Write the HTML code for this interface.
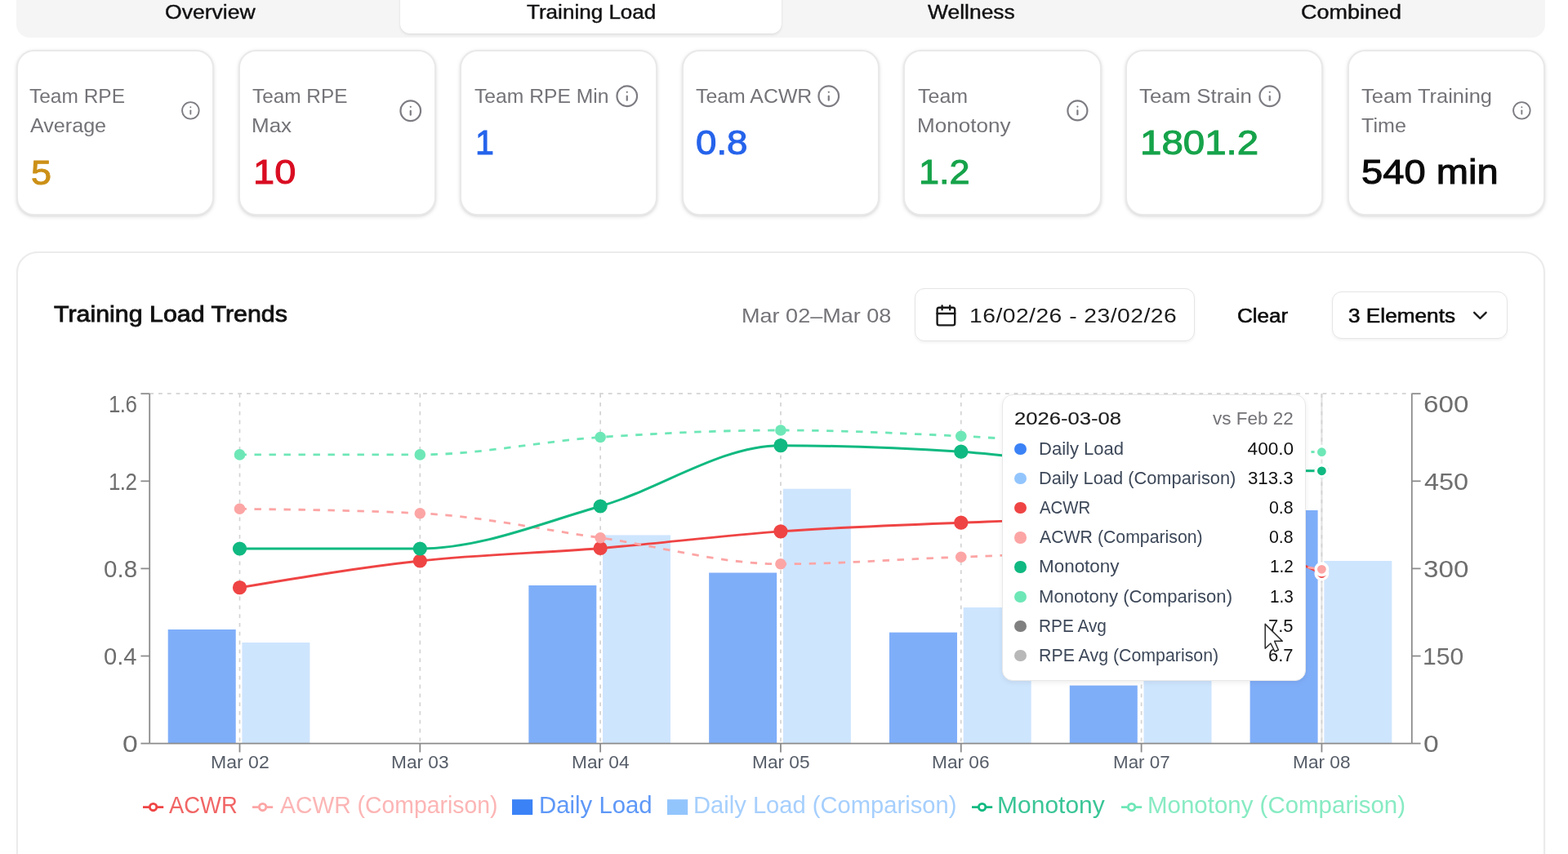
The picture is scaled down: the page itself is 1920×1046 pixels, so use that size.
<!DOCTYPE html>
<html lang="en"><head><meta charset="utf-8"><title>Training Load</title>
<style>
html,body{margin:0;padding:0;background:#fff;}
body{width:1920px;height:1046px;overflow:hidden;position:relative;font-family:"Liberation Sans", sans-serif;-webkit-font-smoothing:antialiased;}
#app{position:absolute;left:0;top:0;width:1920px;height:1046px;overflow:hidden;background:#fff;filter:blur(0.55px);}
.tx{position:absolute;white-space:nowrap;display:block;transform-origin:0 0;}
.li{position:absolute;display:block;overflow:visible;}
.tabs{position:absolute;left:20px;top:-20px;width:1872px;height:66px;background:#f5f5f5;border-radius:16px;}
.tab-active{position:absolute;left:490px;top:-20px;width:467px;height:61px;background:#fff;border-radius:12px;box-shadow:0 1.8px 3.6px rgba(0,0,0,.08),0 0 2px rgba(0,0,0,.06);}
.card{position:absolute;top:61.4px;width:242.2px;height:202.4px;box-sizing:border-box;background:#fff;border:2px solid #e9e9e9;border-radius:22px;box-shadow:0 1.8px 5.4px rgba(0,0,0,.10),0 1.8px 3.6px -1.8px rgba(0,0,0,.10);}
.panel{position:absolute;left:20px;top:308px;width:1872px;height:900px;box-sizing:border-box;background:#fff;border:2px solid #ebebeb;border-radius:26px;box-shadow:0 1.8px 3.6px rgba(0,0,0,.04);}
.btn{position:absolute;box-sizing:border-box;background:#fff;border:1.8px solid #e5e5e5;border-radius:12px;box-shadow:0 1.8px 3.6px rgba(0,0,0,.05);}
.tip{position:absolute;left:1227.2px;top:483.4px;width:372.2px;height:350.4px;box-sizing:border-box;background:#fff;border:1.8px solid #e8e8e8;border-radius:13px;box-shadow:0 2px 6px rgba(0,0,0,.07);}
.bl{position:absolute;left:1242.3px;width:14.4px;height:14.4px;border-radius:50%;display:block;}
#chart{position:absolute;left:0;top:0;}
</style></head>
<body><div id="app">
<nav class="tabbar" role="tablist" aria-label="Sections">
<div class="tabs"></div><div class="tab-active"></div>
<span class="tx" style="left:201.82px;top:-2.03px;font-size:24.2px;line-height:33.88px;color:#111113;transform:scaleX(1.0979);-webkit-text-stroke:0.4px #111113;">Overview</span><span class="tx" style="left:645.02px;top:-2.03px;font-size:24.2px;line-height:33.88px;color:#111113;transform:scaleX(1.0770);-webkit-text-stroke:0.4px #111113;">Training Load</span><span class="tx" style="left:1135.82px;top:-2.03px;font-size:24.2px;line-height:33.88px;color:#111113;transform:scaleX(1.0930);-webkit-text-stroke:0.4px #111113;">Wellness</span><span class="tx" style="left:1592.91px;top:-2.03px;font-size:24.2px;line-height:33.88px;color:#111113;transform:scaleX(1.1165);-webkit-text-stroke:0.4px #111113;">Combined</span>
</nav>
<section class="metrics" aria-label="Team metrics">
<div class="card" style="left:20.20px"></div><div class="card" style="left:291.75px"></div><div class="card" style="left:563.30px"></div><div class="card" style="left:834.85px"></div><div class="card" style="left:1106.40px"></div><div class="card" style="left:1377.95px"></div><div class="card" style="left:1649.50px"></div>
<svg class="li" style="left:221.34px;top:123.04px" width="24.72" height="24.72" viewBox="0 0 24 24" fill="none" stroke="#7c7c82" stroke-width="1.8" stroke-linecap="round" stroke-linejoin="round"><circle cx="12" cy="12" r="10"/><path d="M12 16v-4"/><path d="M12 8h.01"/></svg><svg class="li" style="left:488.14px;top:120.54px" width="29.52" height="29.52" viewBox="0 0 24 24" fill="none" stroke="#7c7c82" stroke-width="1.8" stroke-linecap="round" stroke-linejoin="round"><circle cx="12" cy="12" r="10"/><path d="M12 16v-4"/><path d="M12 8h.01"/></svg><svg class="li" style="left:753.24px;top:102.54px" width="29.52" height="29.52" viewBox="0 0 24 24" fill="none" stroke="#7c7c82" stroke-width="1.8" stroke-linecap="round" stroke-linejoin="round"><circle cx="12" cy="12" r="10"/><path d="M12 16v-4"/><path d="M12 8h.01"/></svg><svg class="li" style="left:999.84px;top:102.54px" width="29.52" height="29.52" viewBox="0 0 24 24" fill="none" stroke="#7c7c82" stroke-width="1.8" stroke-linecap="round" stroke-linejoin="round"><circle cx="12" cy="12" r="10"/><path d="M12 16v-4"/><path d="M12 8h.01"/></svg><svg class="li" style="left:1304.60px;top:121.30px" width="28.80" height="28.80" viewBox="0 0 24 24" fill="none" stroke="#7c7c82" stroke-width="1.8" stroke-linecap="round" stroke-linejoin="round"><circle cx="12" cy="12" r="10"/><path d="M12 16v-4"/><path d="M12 8h.01"/></svg><svg class="li" style="left:1539.74px;top:102.54px" width="29.52" height="29.52" viewBox="0 0 24 24" fill="none" stroke="#7c7c82" stroke-width="1.8" stroke-linecap="round" stroke-linejoin="round"><circle cx="12" cy="12" r="10"/><path d="M12 16v-4"/><path d="M12 8h.01"/></svg><svg class="li" style="left:1851.24px;top:122.94px" width="24.72" height="24.72" viewBox="0 0 24 24" fill="none" stroke="#7c7c82" stroke-width="1.8" stroke-linecap="round" stroke-linejoin="round"><circle cx="12" cy="12" r="10"/><path d="M12 16v-4"/><path d="M12 8h.01"/></svg>
<span class="tx" style="left:36.30px;top:101.07px;font-size:24.2px;line-height:33.88px;color:#737378;transform:scaleX(1.0124);">Team RPE</span><span class="tx" style="left:36.70px;top:137.27px;font-size:24.2px;line-height:33.88px;color:#737378;transform:scaleX(1.0381);">Average</span><span class="tx" style="left:308.70px;top:101.07px;font-size:24.2px;line-height:33.88px;color:#737378;transform:scaleX(1.0072);">Team RPE</span><span class="tx" style="left:307.63px;top:137.27px;font-size:24.2px;line-height:33.88px;color:#737378;transform:scaleX(1.0740);">Max</span><span class="tx" style="left:580.60px;top:101.07px;font-size:24.2px;line-height:33.88px;color:#737378;transform:scaleX(1.0198);">Team RPE Min</span><span class="tx" style="left:851.80px;top:101.07px;font-size:24.2px;line-height:33.88px;color:#737378;transform:scaleX(1.0280);">Team ACWR</span><span class="tx" style="left:1124.40px;top:101.07px;font-size:24.2px;line-height:33.88px;color:#737378;transform:scaleX(1.0328);">Team</span><span class="tx" style="left:1123.32px;top:137.27px;font-size:24.2px;line-height:33.88px;color:#737378;transform:scaleX(1.0770);">Monotony</span><span class="tx" style="left:1395.00px;top:101.07px;font-size:24.2px;line-height:33.88px;color:#737378;transform:scaleX(1.0674);">Team Strain</span><span class="tx" style="left:1666.90px;top:101.07px;font-size:24.2px;line-height:33.88px;color:#737378;transform:scaleX(1.0530);">Team Training</span><span class="tx" style="left:1666.90px;top:137.27px;font-size:24.2px;line-height:33.88px;color:#737378;transform:scaleX(1.0382);">Time</span><span class="tx" style="left:37.78px;top:181.38px;font-size:43.4px;line-height:60.76px;color:#cc9016;transform:scaleX(1.0348);-webkit-text-stroke:1.0px #cc9016;">5</span><span class="tx" style="left:309.50px;top:182.05px;font-size:42.0px;line-height:58.8px;color:#d90d22;transform:scaleX(1.1186);-webkit-text-stroke:1.0px #d90d22;">10</span><span class="tx" style="left:581.85px;top:145.85px;font-size:42.0px;line-height:58.8px;color:#2563eb;transform:scaleX(0.9800);-webkit-text-stroke:1.0px #2563eb;">1</span><span class="tx" style="left:852.46px;top:145.85px;font-size:42.0px;line-height:58.8px;color:#2563eb;transform:scaleX(1.0872);-webkit-text-stroke:1.0px #2563eb;">0.8</span><span class="tx" style="left:1125.32px;top:182.05px;font-size:42.0px;line-height:58.8px;color:#16a34a;transform:scaleX(1.0722);-webkit-text-stroke:1.0px #16a34a;">1.2</span><span class="tx" style="left:1395.77px;top:145.85px;font-size:42.0px;line-height:58.8px;color:#16a34a;transform:scaleX(1.1303);-webkit-text-stroke:1.0px #16a34a;">1801.2</span><span class="tx" style="left:1667.24px;top:182.05px;font-size:42.0px;line-height:58.8px;color:#0a0a0a;transform:scaleX(1.1233);-webkit-text-stroke:1.0px #0a0a0a;">540 min</span>
</section>
<section class="trends" aria-label="Training Load Trends">
<div class="panel"></div>
<div class="toolbar">
<div class="btn" style="left:1120px;top:353.2px;width:343.2px;height:65px"></div>
<div class="btn" style="left:1630.5px;top:357px;width:215.5px;height:57.5px"></div>
<svg class="li" style="left:1144px;top:371.6px" width="28.8" height="28.8" viewBox="0 0 24 24" fill="none" stroke="#1a1a1a" stroke-width="2" stroke-linecap="round" stroke-linejoin="round"><path d="M8 2v4"/><path d="M16 2v4"/><rect width="18" height="18" x="3" y="4" rx="2"/><path d="M3 10h18"/></svg>
<svg class="li" style="left:1797.7px;top:372.1px" width="28.8" height="28.8" viewBox="0 0 24 24" fill="none" stroke="#1a1a1a" stroke-width="2" stroke-linecap="round" stroke-linejoin="round"><path d="m6 9 6 6 6-6"/></svg>
<span class="tx" style="left:65.85px;top:365.08px;font-size:28.4px;line-height:39.76px;color:#111111;transform:scaleX(1.0696);-webkit-text-stroke:0.85px #111111;">Training Load Trends</span><span class="tx" style="left:907.63px;top:369.87px;font-size:24.2px;line-height:33.88px;color:#737378;transform:scaleX(1.1181);">Mar 02–Mar 08</span><span class="tx" style="left:1186.83px;top:369.87px;font-size:24.2px;line-height:33.88px;color:#1c1c1c;transform:scaleX(1.1700);letter-spacing:0.391px;">16/02/26 - 23/02/26</span><span class="tx" style="left:1514.97px;top:369.67px;font-size:24.2px;line-height:33.88px;color:#0a0a0a;transform:scaleX(1.0778);-webkit-text-stroke:0.55px #0a0a0a;">Clear</span><span class="tx" style="left:1650.80px;top:369.67px;font-size:24.2px;line-height:33.88px;color:#0a0a0a;transform:scaleX(1.0827);-webkit-text-stroke:0.55px #0a0a0a;">3 Elements</span>
</div>
<div class="chart-area">
<svg id="chart" width="1920" height="1046" viewBox="0 0 1920 1046" role="img" aria-label="Training load chart">
<line x1="1618.42" y1="482.2" x2="1618.42" y2="910.6" stroke="#e3e3e3" stroke-width="2.2"/>
<g stroke="#d3d3d3" stroke-width="1.7" stroke-dasharray="4.8 6" fill="none">
<line x1="183.2" y1="482.2" x2="1728.8" y2="482.2"/>
<line x1="293.50" y1="482.2" x2="293.50" y2="910.6"/>
<line x1="514.32" y1="482.2" x2="514.32" y2="910.6"/>
<line x1="735.14" y1="482.2" x2="735.14" y2="910.6"/>
<line x1="955.96" y1="482.2" x2="955.96" y2="910.6"/>
<line x1="1176.78" y1="482.2" x2="1176.78" y2="910.6"/>
<line x1="1397.60" y1="482.2" x2="1397.60" y2="910.6"/>
<line x1="1618.42" y1="482.2" x2="1618.42" y2="910.6"/>
</g>
<rect x="205.70" y="771" width="83.0" height="139.60" fill="#3b82f6" fill-opacity="0.65"/>
<rect x="296.40" y="787" width="83.0" height="123.60" fill="#93c5fd" fill-opacity="0.45"/>
<rect x="647.34" y="717" width="83.0" height="193.60" fill="#3b82f6" fill-opacity="0.65"/>
<rect x="738.04" y="655.4" width="83.0" height="255.20" fill="#93c5fd" fill-opacity="0.45"/>
<rect x="868.16" y="701.5" width="83.0" height="209.10" fill="#3b82f6" fill-opacity="0.65"/>
<rect x="958.86" y="598.7" width="83.0" height="311.90" fill="#93c5fd" fill-opacity="0.45"/>
<rect x="1088.98" y="774.6" width="83.0" height="136.00" fill="#3b82f6" fill-opacity="0.65"/>
<rect x="1179.68" y="744" width="83.0" height="166.60" fill="#93c5fd" fill-opacity="0.45"/>
<rect x="1309.80" y="839.6" width="83.0" height="71.00" fill="#3b82f6" fill-opacity="0.65"/>
<rect x="1400.50" y="760" width="83.0" height="150.60" fill="#93c5fd" fill-opacity="0.45"/>
<rect x="1530.62" y="625" width="83.0" height="285.60" fill="#3b82f6" fill-opacity="0.65"/>
<rect x="1621.32" y="687" width="83.0" height="223.60" fill="#93c5fd" fill-opacity="0.45"/>
<g stroke="#8c8c8c" stroke-width="1.8" fill="none">
<line x1="183.2" y1="910.6" x2="1728.8" y2="910.6"/>
<line x1="183.2" y1="482.2" x2="183.2" y2="910.6"/>
<line x1="1728.8" y1="482.2" x2="1728.8" y2="910.6"/>
<line x1="172.39999999999998" y1="482.20" x2="183.2" y2="482.20"/>
<line x1="1728.8" y1="482.20" x2="1739.6" y2="482.20"/>
<line x1="172.39999999999998" y1="589.30" x2="183.2" y2="589.30"/>
<line x1="1728.8" y1="589.30" x2="1739.6" y2="589.30"/>
<line x1="172.39999999999998" y1="696.40" x2="183.2" y2="696.40"/>
<line x1="1728.8" y1="696.40" x2="1739.6" y2="696.40"/>
<line x1="172.39999999999998" y1="803.50" x2="183.2" y2="803.50"/>
<line x1="1728.8" y1="803.50" x2="1739.6" y2="803.50"/>
<line x1="172.39999999999998" y1="910.60" x2="183.2" y2="910.60"/>
<line x1="1728.8" y1="910.60" x2="1739.6" y2="910.60"/>
<line x1="293.50" y1="910.6" x2="293.50" y2="921.4"/>
<line x1="514.32" y1="910.6" x2="514.32" y2="921.4"/>
<line x1="735.14" y1="910.6" x2="735.14" y2="921.4"/>
<line x1="955.96" y1="910.6" x2="955.96" y2="921.4"/>
<line x1="1176.78" y1="910.6" x2="1176.78" y2="921.4"/>
<line x1="1397.60" y1="910.6" x2="1397.60" y2="921.4"/>
<line x1="1618.42" y1="910.6" x2="1618.42" y2="921.4"/>
</g>
<path d="M293.50,719.70C367.11,707.37 440.71,695.03 514.32,687.00C587.93,678.97 661.53,677.52 735.14,671.50C808.75,665.48 882.35,656.12 955.96,650.90C1029.57,645.68 1103.17,643.02 1176.78,640.20C1250.39,637.38 1323.99,634.00 1397.60,634.00C1471.21,634.00 1544.81,668.25 1618.42,702.50" fill="none" stroke="#ef4444" stroke-width="2.9"/>
<circle cx="293.50" cy="719.70" r="8.6" fill="#ef4444"/>
<circle cx="514.32" cy="687.00" r="8.6" fill="#ef4444"/>
<circle cx="735.14" cy="671.50" r="8.6" fill="#ef4444"/>
<circle cx="955.96" cy="650.90" r="8.6" fill="#ef4444"/>
<circle cx="1176.78" cy="640.20" r="8.6" fill="#ef4444"/>
<circle cx="1397.60" cy="634.00" r="8.6" fill="#ef4444"/>
<circle cx="1618.42" cy="702.50" r="8.6" fill="#ef4444"/>
<path d="M293.50,623.30C367.11,624.20 440.71,625.10 514.32,628.70C587.93,632.30 661.53,648.35 735.14,658.70C808.75,669.05 882.35,690.80 955.96,690.80C1029.57,690.80 1103.17,684.67 1176.78,682.20C1250.39,679.73 1323.99,676.00 1397.60,676.00C1471.21,676.00 1544.81,686.65 1618.42,697.30" fill="none" stroke="#fca5a5" stroke-width="2.8" stroke-dasharray="8.4 9.6"/>
<circle cx="293.50" cy="623.30" r="6.800000000000001" fill="#fca5a5"/>
<circle cx="514.32" cy="628.70" r="6.800000000000001" fill="#fca5a5"/>
<circle cx="735.14" cy="658.70" r="6.800000000000001" fill="#fca5a5"/>
<circle cx="955.96" cy="690.80" r="6.800000000000001" fill="#fca5a5"/>
<circle cx="1176.78" cy="682.20" r="6.800000000000001" fill="#fca5a5"/>
<circle cx="1397.60" cy="676.00" r="6.800000000000001" fill="#fca5a5"/>
<circle cx="1618.42" cy="697.30" r="6.800000000000001" fill="#fca5a5"/>
<path d="M293.50,672.00C367.11,672.00 440.71,672.00 514.32,672.00C587.93,672.00 661.53,641.05 735.14,620.00C808.75,598.95 882.35,545.70 955.96,545.70C1029.57,545.70 1103.17,548.48 1176.78,553.20C1250.39,557.92 1323.99,572.13 1397.60,574.00C1471.21,575.87 1544.81,576.33 1618.42,576.80" fill="none" stroke="#10b981" stroke-width="3.0"/>
<circle cx="293.50" cy="672.00" r="8.6" fill="#10b981"/>
<circle cx="514.32" cy="672.00" r="8.6" fill="#10b981"/>
<circle cx="735.14" cy="620.00" r="8.6" fill="#10b981"/>
<circle cx="955.96" cy="545.70" r="8.6" fill="#10b981"/>
<circle cx="1176.78" cy="553.20" r="8.6" fill="#10b981"/>
<circle cx="1397.60" cy="574.00" r="8.6" fill="#10b981"/>
<circle cx="1618.42" cy="576.80" r="8.6" fill="#10b981"/>
<path d="M293.50,556.90C367.11,556.90 440.71,556.90 514.32,556.90C587.93,556.90 661.53,540.48 735.14,535.50C808.75,530.52 882.35,527.00 955.96,527.00C1029.57,527.00 1103.17,530.70 1176.78,534.20C1250.39,537.70 1323.99,544.75 1397.60,548.00C1471.21,551.25 1544.81,552.48 1618.42,553.70" fill="none" stroke="#6ee7b7" stroke-width="2.8" stroke-dasharray="8.4 9.6"/>
<circle cx="293.50" cy="556.90" r="6.800000000000001" fill="#6ee7b7"/>
<circle cx="514.32" cy="556.90" r="6.800000000000001" fill="#6ee7b7"/>
<circle cx="735.14" cy="535.50" r="6.800000000000001" fill="#6ee7b7"/>
<circle cx="955.96" cy="527.00" r="6.800000000000001" fill="#6ee7b7"/>
<circle cx="1176.78" cy="534.20" r="6.800000000000001" fill="#6ee7b7"/>
<circle cx="1397.60" cy="548.00" r="6.800000000000001" fill="#6ee7b7"/>
<circle cx="1618.42" cy="553.70" r="6.800000000000001" fill="#6ee7b7"/>
<circle cx="1618.42" cy="702.5" r="7.2" fill="#ef4444" stroke="#ffffff" stroke-width="3.6"/>
<circle cx="1618.42" cy="697.3" r="7.2" fill="#fca5a5" stroke="#ffffff" stroke-width="3.6"/>
<circle cx="1618.42" cy="576.8" r="7.2" fill="#10b981" stroke="#ffffff" stroke-width="3.6"/>
<circle cx="1618.42" cy="553.7" r="7.2" fill="#6ee7b7" stroke="#ffffff" stroke-width="3.6"/>
</svg>
<div class="axis-labels">
<span class="tx" style="left:133.30px;top:475.36px;font-size:28.8px;line-height:40.32px;color:#6e6e6e;transform:scaleX(0.9000);letter-spacing:-0.619px;">1.6</span><span class="tx" style="left:133.30px;top:570.16px;font-size:28.8px;line-height:40.32px;color:#6e6e6e;transform:scaleX(0.9000);letter-spacing:-0.619px;">1.2</span><span class="tx" style="left:127.27px;top:677.26px;font-size:28.8px;line-height:40.32px;color:#6e6e6e;transform:scaleX(1.0259);">0.8</span><span class="tx" style="left:126.79px;top:784.36px;font-size:28.8px;line-height:40.32px;color:#6e6e6e;transform:scaleX(1.0124);">0.4</span><span class="tx" style="left:149.63px;top:891.46px;font-size:28.8px;line-height:40.32px;color:#6e6e6e;transform:scaleX(1.1700);">0</span><span class="tx" style="left:1743.25px;top:475.36px;font-size:28.8px;line-height:40.32px;color:#6e6e6e;transform:scaleX(1.1514);">600</span><span class="tx" style="left:1744.40px;top:570.16px;font-size:28.8px;line-height:40.32px;color:#6e6e6e;transform:scaleX(1.1269);">450</span><span class="tx" style="left:1743.25px;top:677.26px;font-size:28.8px;line-height:40.32px;color:#6e6e6e;transform:scaleX(1.1514);">300</span><span class="tx" style="left:1742.31px;top:784.36px;font-size:28.8px;line-height:40.32px;color:#6e6e6e;transform:scaleX(1.0437);">150</span><span class="tx" style="left:1743.23px;top:891.46px;font-size:28.8px;line-height:40.32px;color:#6e6e6e;transform:scaleX(1.1700);">0</span><span class="tx" style="left:258.14px;top:918.59px;font-size:21.7px;line-height:30.38px;color:#565d68;transform:scaleX(1.0621);">Mar 02</span><span class="tx" style="left:478.97px;top:918.59px;font-size:21.7px;line-height:30.38px;color:#565d68;transform:scaleX(1.0461);">Mar 03</span><span class="tx" style="left:699.79px;top:918.59px;font-size:21.7px;line-height:30.38px;color:#565d68;transform:scaleX(1.0461);">Mar 04</span><span class="tx" style="left:920.61px;top:918.59px;font-size:21.7px;line-height:30.38px;color:#565d68;transform:scaleX(1.0461);">Mar 05</span><span class="tx" style="left:1141.43px;top:918.59px;font-size:21.7px;line-height:30.38px;color:#565d68;transform:scaleX(1.0461);">Mar 06</span><span class="tx" style="left:1363.27px;top:918.59px;font-size:21.7px;line-height:30.38px;color:#565d68;transform:scaleX(1.0315);">Mar 07</span><span class="tx" style="left:1583.07px;top:918.59px;font-size:21.7px;line-height:30.38px;color:#565d68;transform:scaleX(1.0461);">Mar 08</span>
</div>
<div class="legend">
<svg class="li" style="left:174.5px;top:976.0px" width="25.2" height="25.2" viewBox="0 0 32 32"><path stroke-width="3.6" fill="none" stroke="#ef4444" d="M0,16h10.666666666666666A5.333333333333333,5.333333333333333,0,1,1,21.333333333333332,16H32M21.333333333333332,16A5.333333333333333,5.333333333333333,0,1,1,10.666666666666666,16"/></svg><svg class="li" style="left:309.25px;top:976.0px" width="25.2" height="25.2" viewBox="0 0 32 32"><path stroke-width="3.6" fill="none" stroke="#fca5a5" d="M0,16h10.666666666666666A5.333333333333333,5.333333333333333,0,1,1,21.333333333333332,16H32M21.333333333333332,16A5.333333333333333,5.333333333333333,0,1,1,10.666666666666666,16"/></svg><svg class="li" style="left:626.5px;top:976.4px" width="25.2" height="25.2" viewBox="0 0 32 32"><path stroke="none" fill="#3b82f6" d="M0,4h32v24h-32z"/></svg><svg class="li" style="left:817.2px;top:976.4px" width="25.2" height="25.2" viewBox="0 0 32 32"><path stroke="none" fill="#93c5fd" d="M0,4h32v24h-32z"/></svg><svg class="li" style="left:1189.7px;top:976.0px" width="25.2" height="25.2" viewBox="0 0 32 32"><path stroke-width="3.6" fill="none" stroke="#10b981" d="M0,16h10.666666666666666A5.333333333333333,5.333333333333333,0,1,1,21.333333333333332,16H32M21.333333333333332,16A5.333333333333333,5.333333333333333,0,1,1,10.666666666666666,16"/></svg><svg class="li" style="left:1373px;top:976.0px" width="25.2" height="25.2" viewBox="0 0 32 32"><path stroke-width="3.6" fill="none" stroke="#6ee7b7" d="M0,16h10.666666666666666A5.333333333333333,5.333333333333333,0,1,1,21.333333333333332,16H32M21.333333333333332,16A5.333333333333333,5.333333333333333,0,1,1,10.666666666666666,16"/></svg>
<span class="tx" style="left:207.00px;top:966.11px;font-size:28.8px;line-height:40.32px;color:#ef4444;transform:scaleX(0.9520);opacity:.82;">ACWR</span><span class="tx" style="left:343.00px;top:966.11px;font-size:28.8px;line-height:40.32px;color:#fca5a5;transform:scaleX(0.9858);opacity:.82;">ACWR (Comparison)</span><span class="tx" style="left:659.86px;top:966.11px;font-size:28.8px;line-height:40.32px;color:#3b82f6;transform:scaleX(1.0191);opacity:.82;">Daily Load</span><span class="tx" style="left:849.48px;top:966.11px;font-size:28.8px;line-height:40.32px;color:#93c5fd;transform:scaleX(1.0124);opacity:.82;">Daily Load (Comparison)</span><span class="tx" style="left:1221.32px;top:966.11px;font-size:28.8px;line-height:40.32px;color:#10b981;transform:scaleX(1.0422);opacity:.82;">Monotony</span><span class="tx" style="left:1404.95px;top:966.11px;font-size:28.8px;line-height:40.32px;color:#6ee7b7;transform:scaleX(1.0232);opacity:.82;">Monotony (Comparison)</span>
</div>
<div class="tooltip" role="tooltip">
<div class="tip"></div>
<i class="bl" style="top:542.60px;background:#3b82f6"></i><i class="bl" style="top:578.80px;background:#93c5fd"></i><i class="bl" style="top:615.00px;background:#ef4444"></i><i class="bl" style="top:651.20px;background:#fca5a5"></i><i class="bl" style="top:687.40px;background:#10b981"></i><i class="bl" style="top:723.60px;background:#6ee7b7"></i><i class="bl" style="top:759.80px;background:#808080"></i><i class="bl" style="top:796.00px;background:#b8b8b8"></i>
<span class="tx" style="left:1242.05px;top:496.85px;font-size:22.6px;line-height:31.64px;color:#1c1c1c;transform:scaleX(1.1335);-webkit-text-stroke:0.15px #1c1c1c;">2026-03-08</span><span class="tx" style="left:1485.20px;top:496.85px;font-size:22.6px;line-height:31.64px;color:#737378;transform:scaleX(0.9955);">vs Feb 22</span><span class="tx" style="left:1271.63px;top:533.65px;font-size:22.6px;line-height:31.64px;color:#3d4859;transform:scaleX(0.9744);">Daily Load</span><span class="tx" style="left:1527.60px;top:533.65px;font-size:22.6px;line-height:31.64px;color:#111111;">400.0</span><span class="tx" style="left:1271.63px;top:569.85px;font-size:22.6px;line-height:31.64px;color:#3d4859;transform:scaleX(0.9659);">Daily Load (Comparison)</span><span class="tx" style="left:1528.30px;top:569.85px;font-size:22.6px;line-height:31.64px;color:#111111;transform:scaleX(0.9844);">313.3</span><span class="tx" style="left:1272.60px;top:606.05px;font-size:22.6px;line-height:31.64px;color:#3d4859;transform:scaleX(0.9000);letter-spacing:-0.015px;">ACWR</span><span class="tx" style="left:1554.30px;top:606.05px;font-size:22.6px;line-height:31.64px;color:#111111;transform:scaleX(0.9435);">0.8</span><span class="tx" style="left:1272.60px;top:642.25px;font-size:22.6px;line-height:31.64px;color:#3d4859;transform:scaleX(0.9412);">ACWR (Comparison)</span><span class="tx" style="left:1554.30px;top:642.25px;font-size:22.6px;line-height:31.64px;color:#111111;transform:scaleX(0.9435);">0.8</span><span class="tx" style="left:1271.61px;top:678.45px;font-size:22.6px;line-height:31.64px;color:#3d4859;transform:scaleX(0.9927);">Monotony</span><span class="tx" style="left:1555.08px;top:678.45px;font-size:22.6px;line-height:31.64px;color:#111111;transform:scaleX(0.9181);">1.2</span><span class="tx" style="left:1271.62px;top:714.65px;font-size:22.6px;line-height:31.64px;color:#3d4859;transform:scaleX(0.9779);">Monotony (Comparison)</span><span class="tx" style="left:1555.08px;top:714.65px;font-size:22.6px;line-height:31.64px;color:#111111;transform:scaleX(0.9181);">1.3</span><span class="tx" style="left:1271.68px;top:750.85px;font-size:22.6px;line-height:31.64px;color:#3d4859;transform:scaleX(0.9209);">RPE Avg</span><span class="tx" style="left:1553.32px;top:750.85px;font-size:22.6px;line-height:31.64px;color:#111111;transform:scaleX(0.9751);">7.5</span><span class="tx" style="left:1271.66px;top:787.05px;font-size:22.6px;line-height:31.64px;color:#3d4859;transform:scaleX(0.9443);">RPE Avg (Comparison)</span><span class="tx" style="left:1553.32px;top:787.05px;font-size:22.6px;line-height:31.64px;color:#111111;transform:scaleX(0.9751);">6.7</span>
</div>
</div>
</section>
<svg class="li" style="left:0;top:0" width="1920" height="1046" viewBox="0 0 1920 1046" aria-hidden="true"><path d="M1549.2 764.4 L1549.2 794.2 L1555.9 788.0 L1560.9 798.0 L1565.4 796.0 L1560.6 785.2 L1570.3 785.2 Z" fill="#fff" stroke="#2a2a2a" stroke-width="1.5" stroke-linejoin="round"/></svg>
</div></body></html>
